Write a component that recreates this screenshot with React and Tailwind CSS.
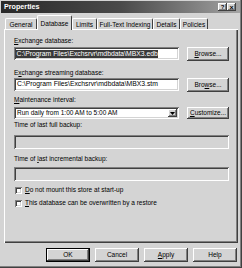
import React from 'react';

const raised =
  'bg-[#d4d4d4] shadow-[inset_-1px_-1px_#404040,inset_1px_1px_#ffffff,inset_-2px_-2px_#808080]';
const sunken =
  'shadow-[inset_1px_1px_#808080,inset_-1px_-1px_#ffffff,inset_2px_2px_#404040,inset_-2px_-2px_#d4d4d4]';

const Btn = ({ children, className = '' }) => (
  <div className={`${raised} flex items-center justify-center text-black ${className}`}>
    {children}
  </div>
);

const Label = ({ children, className = '' }) => (
  <div className={`h-[10px] leading-[10px] text-black ${className}`}>{children}</div>
);

const Tab = ({ label, w, selected }) =>
  selected ? (
    <div
      className={`${w} h-[15px] -mb-[1px] relative z-10 bg-[#d4d4d4] border-t border-l border-white border-r border-r-[#404040] rounded-t-[2px] flex justify-center pt-[4px] leading-[8px]`}
    >
      {label}
    </div>
  ) : (
    <div
      className={`${w} h-[11px] border-t border-l border-white border-r border-r-[#404040] rounded-t-[2px] flex justify-center pt-[2px] leading-[8px]`}
    >
      {label}
    </div>
  );

const Check = ({ children, className = '' }) => (
  <div className={`flex items-center h-[10px] ml-[1px] ${className}`}>
    <div className={`w-[7px] h-[7px] bg-white ${sunken}`} />
    <span className="ml-[3px] leading-[10px]">{children}</span>
  </div>
);

export default function App() {
  return (
    <div
      className="w-[242px] h-[268px] bg-[#d4d4d4] p-[1px] flex flex-col text-[6.5px] text-black shadow-[inset_-1px_-1px_#404040,inset_-2px_-2px_#808080]"
      style={{ fontFamily: '"Liberation Sans", Arial, sans-serif' }}
    >
      {/* Title bar */}
      <div className="h-[12px] w-[239px] flex items-center pl-[3px] pr-[4px] bg-gradient-to-r from-[#2a2a2a] via-[#4a4a4a] to-[#a4a4a4]">
        <span className="text-white font-bold text-[7.2px] leading-none">Properties</span>
        <div className="ml-auto flex">
          <Btn className="w-[9px] h-[8px] text-[6px] font-bold leading-none">?</Btn>
          <Btn className="w-[9px] h-[8px] text-[7px] font-bold leading-none">×</Btn>
        </div>
      </div>

      {/* Tabs */}
      <div className="mt-[2px] h-[14px] flex items-end pl-[4px]">
        <Tab label="General" w="w-[32px]" />
        <Tab label="Database" w="w-[35px]" selected />
        <Tab label="Limits" w="w-[25px]" />
        <Tab label="Full-Text Indexing" w="w-[56px]" />
        <Tab label="Details" w="w-[27px]" />
        <Tab label="Policies" w="w-[28px]" />
      </div>

      {/* Panel */}
      <div className="ml-[3px] w-[234px] h-[214px] flex flex-col pt-[7px] pl-[10px] pr-[9px] shadow-[inset_1px_1px_#ffffff,inset_-1px_-1px_#404040,inset_-2px_-2px_#808080]">
        <Label>
          <span className="underline">E</span>xchange database:
        </Label>
        <div className="mt-[1px] h-[14px] flex items-start gap-[8px]">
          <div className={`w-[165px] h-[13px] bg-white ${sunken} flex items-center pl-[2px] text-[6.8px]`}>
            <span className="bg-[#3a3a3a] text-white leading-[8px] px-[0.5px]">
              C:\Program Files\Exchsrvr\mdbdata\MBX3.edb
            </span>
          </div>
          <Btn className="w-[42px] h-[14px]">
            <span>
              <span className="underline">B</span>rowse...
            </span>
          </Btn>
        </div>

        <Label className="mt-[7px]">
          E<span className="underline">x</span>change streaming database:
        </Label>
        <div className="h-[14px] flex items-start gap-[8px]">
          <div className={`w-[165px] h-[13px] bg-white ${sunken} flex items-center pl-[3px] text-[6.8px]`}>
            C:\Program Files\Exchsrvr\mdbdata\MBX3.stm
          </div>
          <Btn className="w-[42px] h-[14px]">
            <span>
              Bro<span className="underline">w</span>se...
            </span>
          </Btn>
        </div>

        <Label className="mt-[3px]">
          <span className="underline">M</span>aintenance interval:
        </Label>
        <div className="mt-[2px] h-[12px] flex items-start gap-[8px]">
          <div className={`w-[165px] h-[12px] bg-white ${sunken} flex items-center pl-[3px] pr-[2px]`}>
            <span>Run daily from 1:00 AM to 5:00 AM</span>
            <Btn className="ml-auto w-[9px] h-[8px]">
              <svg width="5" height="3" viewBox="0 0 5 3">
                <path d="M0 0h5L2.5 3z" fill="#000" />
              </svg>
            </Btn>
          </div>
          <Btn className="w-[42px] h-[12px]">
            <span>
              <span className="underline">C</span>ustomize...
            </span>
          </Btn>
        </div>

        <Label className="mt-[1px]">Time of last full backup:</Label>
        <div className={`mt-[5px] h-[14px] w-[215px] ${sunken}`} />

        <Label className="mt-[5px]">
          Time of <span className="underline">l</span>ast incremental backup:
        </Label>
        <div className={`mt-[3px] h-[14px] w-[215px] ${sunken}`} />

        <Check className="mt-[4px]">
          <span className="underline">D</span>o not mount this store at start-up
        </Check>
        <Check className="mt-[3px]">
          <span className="underline">T</span>his database can be overwritten by a restore
        </Check>
      </div>

      {/* Dialog buttons */}
      <div className="mt-[5px] flex pl-[45px] gap-[5px]">
        <div className="w-[44px] h-[14px] border border-black flex">
          <Btn className="flex-1">OK</Btn>
        </div>
        <Btn className="w-[44px] h-[14px]">Cancel</Btn>
        <Btn className="w-[44px] h-[14px]">
          <span>
            <span className="underline">A</span>pply
          </span>
        </Btn>
        <Btn className="w-[44px] h-[14px]">Help</Btn>
      </div>
    </div>
  );
}
